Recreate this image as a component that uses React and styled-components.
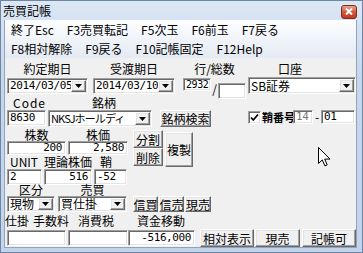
import React from 'react';
import styled, { createGlobalStyle, css } from 'styled-components';

const GlobalStyle = createGlobalStyle`
  html, body { margin: 0; padding: 0; background: #fff; }
  body {
    font-family: "Noto Sans CJK JP", "Noto Sans", sans-serif;
    font-size: 12px;
    color: #000;
  }
  * { box-sizing: border-box; }
`;

const sunken = css`
  border: 1px solid;
  border-color: #a0a0a0 #fff #fff #a0a0a0;
  box-shadow: inset 1px 1px 0 #696969, inset -1px -1px 0 #e3e3e3;
  background: #fff;
`;

const raised = css`
  border: 1px solid;
  border-color: #fff #696969 #696969 #fff;
  box-shadow: inset -1px -1px 0 #a0a0a0, inset 1px 1px 0 #e3e3e3;
  background: #f0f0f0;
`;

const Window = styled.div`
  position: relative;
  width: 363px;
  height: 253px;
  display: flex;
  flex-direction: column;
  border: 1px solid #6d86a6;
  background: linear-gradient(#dce7f4, #c6d7ec 30%, #c3d4ea);
  overflow: hidden;
`;

const TitleBar = styled.div`
  flex: none;
  height: 19px;
  display: flex;
  align-items: center;
  justify-content: space-between;
  padding: 0 5px 0 2px;
`;

const Title = styled.span`
  font-size: 12px;
  line-height: 19px;
`;

const CloseButton = styled.div`
  width: 16px;
  height: 14px;
  margin-top: 2px;
  border: 1px solid #7b2a1d;
  border-radius: 3px;
  background: linear-gradient(#e9a58f, #d4563a 50%, #c03b22);
  display: flex;
  align-items: center;
  justify-content: center;
`;

const Client = styled.div`
  flex: 1;
  display: flex;
  flex-direction: column;
  margin: 0 5px 5px 3px;
  border: 1px solid #8ea4c1;
  border-top: none;
`;

const MenuBar = styled.div`
  flex: none;
  background: linear-gradient(#fdfeff, #eef2f8 60%, #e4eaf3);
`;

const MenuRow = styled.div`
  display: flex;
  height: 19px;
  align-items: center;
`;

const MenuItem = styled.span`
  padding: 0 7px 0 6px;
  line-height: 19px;
  font-size: 12px;
  white-space: nowrap;
`;

const Form = styled.div`
  flex: 1;
  background: #f0f0f0;
  padding: 3px 0 0 2px;
`;

const Row = styled.div`
  display: flex;
  align-items: flex-start;
  height: ${p => p.$h}px;
`;

const Column = styled.div`
  display: flex;
  flex-direction: column;
  margin-left: ${p => p.$ml || 0}px;
  margin-top: ${p => p.$mt || 0}px;
`;

const Label = styled.div`
  flex: none;
  width: ${p => p.$w}px;
  margin-left: ${p => p.$ml || 0}px;
  padding-left: ${p => p.$pl || 0}px;
  text-align: ${p => p.$align || 'left'};
  line-height: ${p => p.$lh || 14}px;
  font-size: ${p => p.$fs || 12}px;
  font-weight: ${p => (p.$bold ? 700 : 400)};
  white-space: nowrap;
  letter-spacing: ${p => p.$ls || 0}px;
`;

const monoFont = css`
  font-family: "DejaVu Sans Mono", "Noto Sans CJK JP", monospace;
  font-size: 11px;
  letter-spacing: -0.4px;
`;

const TextBox = styled.div`
  ${sunken};
  flex: none;
  width: ${p => p.$w}px;
  height: ${p => p.$h}px;
  margin-left: ${p => p.$ml || 0}px;
  margin-top: ${p => p.$mt || 0}px;
  padding: 0 3px 0 2px;
  text-align: ${p => (p.$right ? 'right' : 'left')};
  line-height: ${p => p.$h - 2}px;
  color: ${p => (p.$disabled ? '#7a7a7a' : '#000')};
  white-space: nowrap;
  ${monoFont};
  ${p => p.$small && css`font-size: 10px;`};
`;

const Combo = styled.div`
  ${sunken};
  flex: none;
  display: flex;
  width: ${p => p.$w}px;
  height: ${p => p.$h}px;
  margin-left: ${p => p.$ml || 0}px;
  margin-top: ${p => p.$mt || 0}px;
  padding: 1px;
`;

const ComboText = styled.div`
  flex: 1;
  min-width: 0;
  display: flex;
  align-items: center;
  padding-left: 1px;
  white-space: nowrap;
  ${p => (p.$jp
    ? css`
      font-size: ${p.$fs || 12}px;
      line-height: ${p.$fs || 12}px;
      letter-spacing: ${p.$ls || 0}px;
    `
    : css`
      ${monoFont};
      line-height: 12px;
    `)};
`;

const DropButton = styled.div`
  ${raised};
  flex: none;
  width: 15px;
  display: flex;
  align-items: center;
  justify-content: center;
`;

const Button = styled.div`
  ${raised};
  flex: none;
  width: ${p => p.$w}px;
  height: ${p => p.$h}px;
  margin-left: ${p => p.$ml || 0}px;
  margin-top: ${p => p.$mt || 0}px;
  display: flex;
  align-items: center;
  justify-content: center;
  font-size: 12px;
  white-space: nowrap;
`;

const CheckBox = styled.div`
  ${sunken};
  flex: none;
  width: 13px;
  height: 13px;
  margin-left: ${p => p.$ml || 0}px;
  margin-top: ${p => p.$mt || 0}px;
  display: flex;
  align-items: center;
  justify-content: center;
`;

const Cursor = styled.svg`
  position: absolute;
  left: 317px;
  top: 146px;
`;

function Arrow() {
  return (
    <svg width="7" height="4" viewBox="0 0 7 4">
      <path d="M0 0h7L3.5 4z" fill="#000" />
    </svg>
  );
}

function ComboBox({ w, h = 16, ml, mt, jp, fs, ls, children }) {
  return (
    <Combo $w={w} $h={h} $ml={ml} $mt={mt}>
      <ComboText $jp={jp} $fs={fs} $ls={ls}>{children}</ComboText>
      <DropButton><Arrow /></DropButton>
    </Combo>
  );
}

const menuRows = [
  ['終了Esc', 'F3売買転記', 'F5次玉', 'F6前玉', 'F7戻る'],
  ['F8相対解除', 'F9戻る', 'F10記帳固定', 'F12Help'],
];

export default function App() {
  return (
    <>
      <GlobalStyle />
      <Window>
        <TitleBar>
          <Title>売買記帳</Title>
          <CloseButton>
            <svg width="8" height="7" viewBox="0 0 8 7">
              <path d="M1 0.5l6 6M7 0.5l-6 6" stroke="#fff" strokeWidth="2" />
            </svg>
          </CloseButton>
        </TitleBar>
        <Client>
          <MenuBar>
            {menuRows.map((items, i) => (
              <MenuRow key={i}>
                {items.map(item => <MenuItem key={item}>{item}</MenuItem>)}
              </MenuRow>
            ))}
          </MenuBar>
          <Form>
            <Row $h={16}>
              <Label $w={81} $align="center" $lh={16}>約定期日</Label>
              <Label $w={82} $ml={5} $align="center" $lh={16}>受渡期日</Label>
              <Label $w={63} $ml={8} $align="center" $lh={16}>行/総数</Label>
              <Label $w={108} $ml={2} $pl={30} $lh={16}>口座</Label>
            </Row>
            <Row $h={20}>
              <ComboBox w={81} mt={1}>2014/03/05</ComboBox>
              <ComboBox w={82} ml={5} mt={1}>2014/03/10</ComboBox>
              <TextBox $w={28} $h={13} $ml={8} $mt={1} $small>2932</TextBox>
              <Label $w={7} $lh={24} $align="center">/</Label>
              <TextBox $w={28} $h={16} $mt={6} />
              <ComboBox w={108} h={17} ml={2} jp>SB証券</ComboBox>
            </Row>
            <Row $h={13}>
              <Label $w={36} $ml={6} $lh={12} $ls={1}>Code</Label>
              <Label $w={30} $ml={43} $lh={12}>銘柄</Label>
            </Row>
            <Row $h={18}>
              <TextBox $w={39} $h={16}>8630</TextBox>
              <ComboBox w={104} h={17} ml={2} jp fs={11} ls={-0.9}>NKSJホールディ</ComboBox>
              <Button $w={51} $h={17} $ml={8}>銘柄検索</Button>
              <CheckBox $ml={37} $mt={1}>
                <svg width="9" height="9" viewBox="0 0 9 9">
                  <path d="M1 4.5l2.3 2.5L8 1.5" stroke="#000" strokeWidth="1.8" fill="none" />
                </svg>
              </CheckBox>
              <Label $w={31} $ml={1} $lh={15} $fs={11} $bold>鞘番号</Label>
              <TextBox $w={20} $h={14} $disabled>14</TextBox>
              <Label $w={8} $lh={14} $align="center">-</Label>
              <TextBox $w={34} $h={14}>01</TextBox>
            </Row>
            <Row $h={57}>
              <Column>
                <Row $h={13}>
                  <Label $w={59} $align="center" $lh={13}>株数</Label>
                  <Label $w={60} $ml={2} $align="center" $lh={13}>株価</Label>
                </Row>
                <Row $h={14}>
                  <TextBox $w={59} $h={14} $right>200</TextBox>
                  <TextBox $w={60} $h={14} $ml={2} $right>2,580</TextBox>
                </Row>
                <Row $h={14}>
                  <Label $w={37} $pl={3} $lh={14}>UNIT</Label>
                  <Label $w={48} $lh={14}>理論株価</Label>
                  <Label $w={36} $pl={8} $lh={14}>鞘</Label>
                </Row>
                <Row $h={16}>
                  <TextBox $w={35} $h={16}>2</TextBox>
                  <TextBox $w={48} $h={16} $ml={2} $right>516</TextBox>
                  <TextBox $w={33} $h={16} $ml={2}>-52</TextBox>
                </Row>
              </Column>
              <Column $ml={5} $mt={2}>
                <Button $w={30} $h={18}>分割</Button>
                <Button $w={30} $h={18}>削除</Button>
              </Column>
              <Button $w={28} $h={35} $ml={2} $mt={4}>複製</Button>
            </Row>
            <Row $h={11}>
              <Label $w={48} $align="center" $lh={9}>区分</Label>
              <Label $w={69} $ml={3} $align="center" $lh={9}>売買</Label>
            </Row>
            <Row $h={17}>
              <ComboBox w={48} jp>現物</ComboBox>
              <ComboBox w={69} ml={3} jp>買仕掛</ComboBox>
              <Button $w={25} $h={16} $ml={6}>信買</Button>
              <Button $w={25} $h={16} $ml={1}>信売</Button>
              <Button $w={26} $h={16} $ml={1}>現売</Button>
            </Row>
            <Row $h={16}>
              <Label $w={28} $ml={-2} $lh={16}>仕掛</Label>
              <Label $w={45} $lh={16}>手数料</Label>
              <Label $w={59} $lh={16}>消費税</Label>
              <Label $w={48} $lh={16}>資金移動</Label>
            </Row>
            <Row $h={18}>
              <TextBox $w={59} $h={16} $mt={1} />
              <TextBox $w={60} $h={16} $ml={2} $mt={1} />
              <TextBox $w={67} $h={16} $mt={1} $right>-516,000</TextBox>
              <Button $w={54} $h={18} $ml={5}>相対表示</Button>
              <Button $w={45} $h={18} $ml={1}>現売</Button>
              <Button $w={54} $h={18} $ml={2}>記帳可</Button>
            </Row>
          </Form>
        </Client>
        <Cursor width="13" height="20" viewBox="0 0 13 20">
          <path d="M0.5 0.5v16l3.8-3.6 2.6 6 2.3-1-2.5-5.8h5.3z" fill="#fff" stroke="#000" strokeWidth="1" strokeLinejoin="round" />
        </Cursor>
      </Window>
    </>
  );
}
